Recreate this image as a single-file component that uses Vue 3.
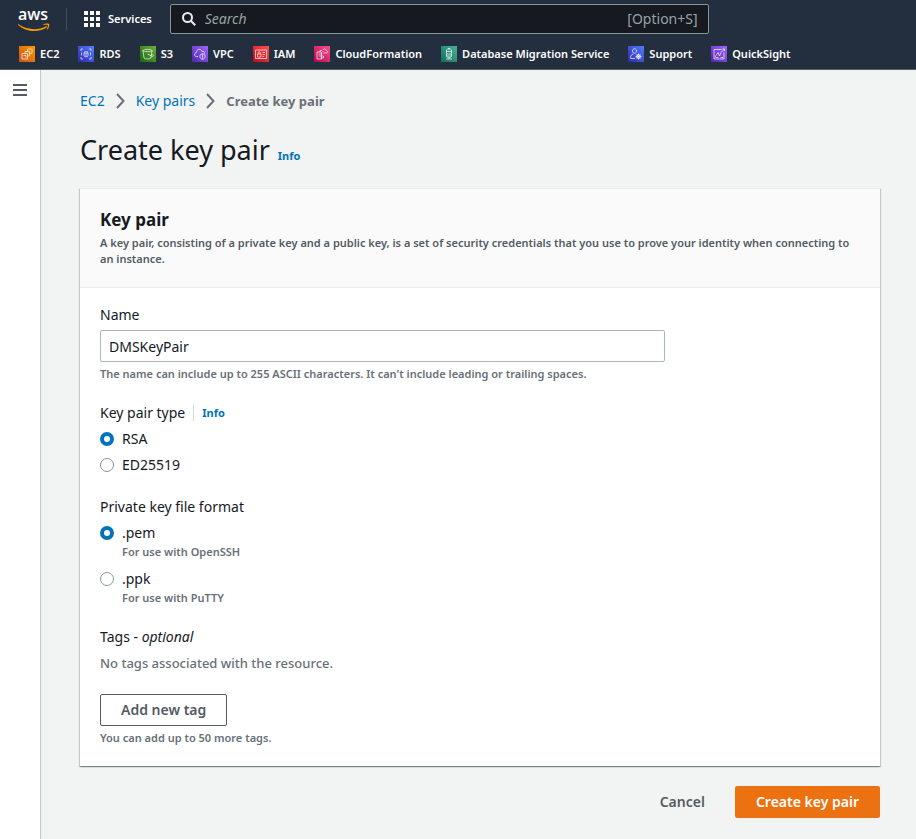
<script setup>
import { ref } from 'vue'

const favorites = [
  { name: 'EC2', from: '#c8511b', to: '#ff9900', d: 'M3 7.500h5.500v5.500H3zM6 7.500V5.500h4.500V10H8.500M8.500 5.500V3.500L9 3h3.500l.5.500V7l-.5.500h-2M4.500 9.500h2.500v2' },
  { name: 'RDS', from: '#2e27ad', to: '#527fff', d: 'M3 5V3h2M11 3h2v2M13 11v2h-2M5 13H3v-2M3.500 6.500v3M12.500 6.500v3M6 6.500c0-1 4-1 4 0v3.500c0 1-4 1-4 0zM6 6.500c0 1 4 1 4 0M8 8v2' },
  { name: 'S3', from: '#1b660f', to: '#6cae3e', d: 'M3 4.500c0-1.500 9-1.500 9 0L11 12c-.5 1.300-6.500 1.300-7 0zM3 4.500c0 1.500 9 1.500 9 0M7.500 8l5 2.500c1.500 0 .5-2-1-2.500' },
  { name: 'VPC', from: '#4d27a8', to: '#a166ff', d: 'M6 10.500H4.500c-2.500 0-2.500-3.500-.3-3.700C4 3 9 2 10 5.500c1.500-.5 3 .5 2.500 2M8 9l2.500-1.500L13 9v2c0 1.500-1.500 2-2.500 2.500C9.500 13 8 12.500 8 11zM10.500 8v5' },
  { name: 'IAM', from: '#bd0816', to: '#ff5252', d: 'M2.500 4h11v8.500h-11zM4.500 8H8v3H4.500zM5.200 8V6.500c0-1 2-1 2 0V8M9.500 6.500H12M9.500 8.500H12M9.500 10.500H11' },
  { name: 'CloudFormation', from: '#b0084d', to: '#ff4f8b', d: 'M3 6h4.500v7H3zM4.500 8h4M4.500 10h5v2h-3M6 6V4.500h2M9 4c1-2 3-1 3 .5 2 0 2 2.500 0 2.500H9.500M8.500 5.500h1' },
  { name: 'Database Migration Service', from: '#116d5b', to: '#4ab29a', d: 'M5.500 4c0-1.300 5-1.300 5 0v6.500c0 1.300-5 1.300-5 0zM5.500 5.500h5M5.500 8h5M5.500 10h5M7 2.500h2M8 11.500V13M5 13h6' },
  { name: 'Support', from: '#2e27ad', to: '#527fff', d: 'M4.500 5c0-3 4-3 4 0s-4 3-4 0M2.500 12.500c0-3 1-4 3-4.500M2.500 12.500H7M10.500 8.500c2.700 0 2.700 4 0 4s-2.700-4 0-4M10.500 7.500v6M7.500 10.500h6M8.500 8.500l4 4M12.500 8.500l-4 4' },
  { name: 'QuickSight', from: '#4d27a8', to: '#a166ff', d: 'M10.500 3.500H3v9.500h10V6.500M4 11l3-4.500 1.500 3.500L10 6.500 13.500 3M11.500 3h2v2M4.500 11.500h3M9.500 11.500H12' },
]

const name = ref('DMSKeyPair')
const keyType = ref('rsa')
const format = ref('pem')
const search = ref('')
</script>

<template>
  <div class="page">
    <header class="top">
      <div class="bar">
        <a class="logo" href="#" aria-label="AWS">
          <span class="logo-text">aws</span>
          <svg class="smile" width="32" height="9" viewBox="0 0 32 9" aria-hidden="true">
            <path d="M.6 1.200C9 6.800 20 7.800 28.200 3.300c.8-.4 1.400.5.700 1C21 10 8 9.300.2 2.100c-.5-.5-.1-1.200.4-.9z" fill="#ff9900" />
            <path d="M25.500 1.300c1.700-1.100 5-.9 5.600-.2.600.8-.2 4.300-1.800 5.500-.3.200-.6.100-.4-.3.500-1.200 1.300-3.500.9-4-.4-.6-2.800-.5-4-.3-.4 0-.6-.4-.3-.7z" fill="#ff9900" />
          </svg>
        </a>
        <span class="rule"></span>
        <button class="services" type="button">
          <svg width="16" height="16" viewBox="0 0 16 16" fill="currentColor" aria-hidden="true">
            <path d="M0 0h4v4H0zM6 0h4v4H6zM12 0h4v4h-4zM0 6h4v4H0zM6 6h4v4H6zM12 6h4v4h-4zM0 12h4v4H0zM6 12h4v4H6zM12 12h4v4h-4z" />
          </svg>
          Services
        </button>
        <label class="search">
          <svg width="14" height="14" viewBox="0 0 14 14" fill="none" stroke="#eaeded" stroke-width="2" aria-hidden="true">
            <circle cx="5.500" cy="5.500" r="4.500" /><path d="M8.800 8.800l4.400 4.400" />
          </svg>
          <input v-model="search" type="search" placeholder="Search" aria-label="Search" />
          <span>[Option+S]</span>
        </label>
      </div>
      <nav class="favorites" aria-label="Favorites">
        <a v-for="(f, i) in favorites" :key="f.name" href="#">
          <svg width="16" height="16" viewBox="0 0 16 16" aria-hidden="true">
            <defs>
              <linearGradient :id="'tile' + i" x1="0" y1="1" x2="1" y2="0">
                <stop offset="0" :stop-color="f.from" /><stop offset="1" :stop-color="f.to" />
              </linearGradient>
            </defs>
            <rect width="16" height="16" :fill="`url(#tile${i})`" />
            <path :d="f.d" fill="none" stroke="#fff" stroke-opacity=".85" stroke-width=".8" />
          </svg>
          {{ f.name }}
        </a>
      </nav>
    </header>

    <div class="shell">
      <aside class="side">
        <button type="button" aria-label="Open navigation">
          <svg width="14" height="12" viewBox="0 0 14 12" aria-hidden="true"><path d="M0 1h14M0 6h14M0 11h14" stroke="#545b64" stroke-width="2" /></svg>
        </button>
      </aside>

      <main class="content">
        <nav class="crumbs" aria-label="Breadcrumbs">
          <a href="#">EC2</a>
          <svg width="9" height="16" viewBox="0 0 9 16" aria-hidden="true"><path d="M1 1l6.500 7L1 15" fill="none" stroke="#687078" stroke-width="2" /></svg>
          <a href="#">Key pairs</a>
          <svg width="9" height="16" viewBox="0 0 9 16" aria-hidden="true"><path d="M1 1l6.500 7L1 15" fill="none" stroke="#687078" stroke-width="2" /></svg>
          <span>Create key pair</span>
        </nav>

        <div class="title">
          <h1>Create key pair</h1>
          <a class="info" href="#">Info</a>
        </div>

        <form @submit.prevent>
          <section class="panel">
            <header class="panel-head">
              <h2>Key pair</h2>
              <p>A key pair, consisting of a private key and a public key, is a set of security credentials that you use to prove your identity when connecting to an instance.</p>
            </header>
            <div class="panel-body">
              <div class="field">
                <label for="kp-name">Name</label>
                <input id="kp-name" v-model="name" class="text" type="text" />
                <p class="hint">The name can include up to 255 ASCII characters. It can't include leading or trailing spaces.</p>
              </div>

              <div class="field" role="radiogroup" aria-labelledby="type-label">
                <div class="label-row">
                  <span id="type-label">Key pair type</span>
                  <a class="info" href="#">Info</a>
                </div>
                <label class="radio"><input v-model="keyType" type="radio" name="type" value="rsa" />RSA</label>
                <label class="radio"><input v-model="keyType" type="radio" name="type" value="ed25519" />ED25519</label>
              </div>

              <div class="field" role="radiogroup" aria-labelledby="format-label">
                <span id="format-label">Private key file format</span>
                <div class="options">
                  <label class="radio"><input v-model="format" type="radio" name="format" value="pem" />.pem<small class="hint">For use with OpenSSH</small></label>
                  <label class="radio"><input v-model="format" type="radio" name="format" value="ppk" />.ppk<small class="hint">For use with PuTTY</small></label>
                </div>
              </div>

              <div class="field">
                <span>Tags - <em>optional</em></span>
                <p class="empty">No tags associated with the resource.</p>
              </div>

              <div class="field">
                <button class="btn outline" type="button">Add new tag</button>
                <p class="hint">You can add up to 50 more tags.</p>
              </div>
            </div>
          </section>

          <div class="actions">
            <button class="btn link" type="button">Cancel</button>
            <button class="btn primary" type="submit">Create key pair</button>
          </div>
        </form>
      </main>
    </div>
  </div>
</template>

<style>
body { background: #f2f3f3; }
</style>

<style scoped>
.page {
  display: flex;
  flex-direction: column;
  min-height: 100vh;
  color: #16191f;
  font: 400 14px/22px "Noto Sans", "Open Sans", sans-serif;
}
.page *, .page { box-sizing: border-box; }
h1, h2, p { margin: 0; }
a { color: #0073bb; text-decoration: none; }
button, input { font: inherit; }
button { cursor: pointer; }
svg { flex: none; display: block; }

.top { background: #232f3e; border-bottom: 1px solid #545b64; color: #fff; }
.bar { display: flex; align-items: center; height: 38px; padding-left: 18px; }
.logo { display: flex; flex-direction: column; width: 32px; color: #fff; }
.logo-text { font: 600 16px/15px "Open Sans", sans-serif; }
.smile { margin-top: 1px; }
.rule { width: 1px; height: 22px; margin: 0 17px 0 16px; background: #414d5c; }
.services {
  display: flex; align-items: center; gap: 8px; padding: 0; border: 0;
  background: none; color: #fff; font-size: 11px; font-weight: 600;
}
.search {
  display: flex; align-items: center; gap: 9px; width: 60%; height: 30px;
  margin-left: 18px; padding: 0 10px 0 11px; border: 1px solid #879596; border-radius: 2px;
  background: #16191f; color: #95a5a6;
}
.search input {
  flex: 1; min-width: 0; padding: 0; border: 0; outline: 0; background: none; color: #fff;
  appearance: none;
}
.search input::placeholder { color: #95a5a6; font-style: italic; opacity: 1; }
.favorites { display: flex; gap: 19px; height: 31px; padding-left: 19px; }
.favorites a {
  display: flex; align-items: center; gap: 5px; color: #fff; white-space: nowrap;
  font-size: 11px; font-weight: 600;
}

.shell { display: flex; flex: 1; }
.side { flex: none; width: 41px; padding: 14px 13px; border-right: 1px solid #c3caca; background: #fff; }
.side button { display: block; padding: 0; border: 0; background: none; }
.content { flex: 1; min-width: 0; padding: 20px 36px 20px 39px; }
.crumbs { display: flex; align-items: center; gap: 11px; }
.crumbs span { color: #687078; font-size: 13px; font-weight: 700; }
.title { display: flex; align-items: baseline; gap: 8px; margin: 20px 0; }
h1 { font-size: 27px; line-height: 36px; font-weight: 400; }
.info { font-size: 11px; font-weight: 700; }

.panel {
  border-top: 1px solid #eaeded; background: #fff;
  box-shadow: 0 1px 1px 0 rgba(0, 28, 36, .3), 1px 1px 1px 0 rgba(0, 28, 36, .15), -1px 1px 1px 0 rgba(0, 28, 36, .15);
}
.panel-head { padding: 20px; border-bottom: 1px solid #eaeded; background: #fafafa; }
h2 { margin-bottom: 4px; font-size: 17px; line-height: 22px; font-weight: 700; }
.panel-head p { color: #545b64; font-size: 11px; line-height: 16px; font-weight: 600; }
.panel-body { display: flex; flex-direction: column; gap: 20px; padding: 16px 20px 20px; }
.field { display: flex; flex-direction: column; align-items: flex-start; gap: 4px; }
.text {
  width: 565px; max-width: 100%; height: 32px; padding: 0 8px; border: 1px solid #aab7b8;
  border-radius: 2px; background: #fff; color: #16191f;
}
.hint { color: #687078; font-size: 11px; line-height: 16px; font-weight: 600; }
.label-row { display: flex; align-items: center; gap: 8px; }
.label-row .info { padding-left: 8px; border-left: 1px solid #d5dbdb; line-height: 16px; }
.radio { display: grid; grid-template-columns: 14px auto; column-gap: 8px; align-items: center; }
.radio .hint { grid-column: 2; }
.radio input {
  appearance: none; width: 14px; height: 14px; margin: 0; border: 1px solid #879596;
  border-radius: 50%; background: #fff;
}
.radio input:checked { border: 4px solid #0073bb; }
.options { display: flex; flex-direction: column; gap: 8px; }
.empty { color: #687078; font-size: 13px; font-weight: 500; }
.btn {
  height: 32px; padding: 0 20px; border: 1px solid transparent; border-radius: 2px;
  background: none; color: #545b64; font-weight: 600;
}
.outline { border-color: #545b64; }
.actions { display: flex; justify-content: flex-end; gap: 9px; margin-top: 20px; }
.primary { background: #ec7211; color: #fff; }
</style>
